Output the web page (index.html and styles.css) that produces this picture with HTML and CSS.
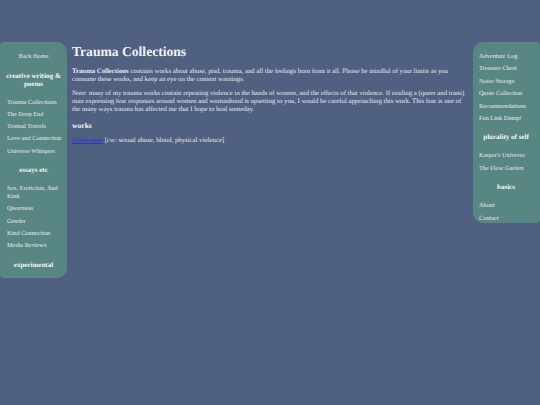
FILE: index.html
```html
<!DOCTYPE html>
<html>
<head>
<meta charset="utf-8">
<link rel="stylesheet" href="styles.css">
</head>
<body>
<div class="page">
  <nav class="side side-left">
    <a class="home" href="#">Back Home</a>
    <h3 class="sec">creative writing &amp; poems</h3>
    <ul>
      <li><a href="#">Trauma Collections</a></li>
      <li><a href="#">The Deep End</a></li>
      <li><a href="#">Textual Travels</a></li>
      <li><a href="#">Love and Connection</a></li>
      <li><a href="#">Universe Whispers</a></li>
    </ul>
    <h3 class="sec">essays etc</h3>
    <ul>
      <li><a href="#">Sex, Eroticism, And Kink</a></li>
      <li><a href="#">Queerness</a></li>
      <li><a href="#">Gender</a></li>
      <li><a href="#">Kind Connection</a></li>
      <li><a href="#">Media Reviews</a></li>
    </ul>
    <h3 class="sec last">experimental</h3>
  </nav>
  <main class="main">
    <h1 class="title">Trauma Collections</h1>
    <p><b>Trauma Collections</b> contains works about abuse, ptsd, trauma, and all the feelings born from it all. Please be mindful of your limits as you consume these works, and keep an eye on the content warnings.</p>
    <p>Note: many of my trauma works contain repeating violence in the hands of women, and the effects of that violence. If reading a (queer and trans) man expressing fear responses around women and womanhood is upsetting to you, I would be careful approaching this work. This fear is one of the many ways trauma has affected me that I hope to heal someday.</p>
    <h2 class="sub">works</h2>
    <p><a class="work" href="#">Dislocation</a> [cw: sexual abuse, blood, physical violence]</p>
  </main>
  <nav class="side side-right">
    <ul class="first">
      <li><a href="#">Adventure Log</a></li>
      <li><a href="#">Treasure Chest</a></li>
      <li><a href="#">Noise Storage</a></li>
      <li><a href="#">Quote Collection</a></li>
      <li><a href="#">Recommendations</a></li>
      <li><a href="#">Fun Link Dump!</a></li>
    </ul>
    <h3 class="sec">plurality of self</h3>
    <ul>
      <li><a href="#">Kasper's Universe</a></li>
      <li><a href="#">The Flow Garden</a></li>
    </ul>
    <h3 class="sec">basics</h3>
    <ul class="end">
      <li><a href="#">About</a></li>
      <li><a href="#">Contact</a></li>
    </ul>
  </nav>
</div>
</body>
</html>
```

FILE: styles.css
```css
html, body {
  margin: 0;
  padding: 0;
  background: #4f6080;
  height: 100%;
}
body {
  font-family: "Liberation Serif", "Times New Roman", serif;
  font-size: 6.3px;
  line-height: 7.8px;
  color: #e6e8ee;
  text-rendering: geometricPrecision;
}
.page {
  display: flex;
  align-items: flex-start;
  padding-top: 42px;
}
.side {
  background: #588783;
  width: 67px;
  flex: none;
  box-sizing: border-box;
}
.side-left {
  border-radius: 4px 10px 10px 4px;
  padding: 11px 0 9px 7px;
}
.side-right {
  border-radius: 10px 4px 4px 10px;
  padding: 11px 0 1px 6px;
}
.side a {
  color: #eaeaee;
  text-decoration: none;
}
.home {
  display: block;
  text-align: center;
  padding-right: 7px;
}
.sec {
  font-size: 7px;
  line-height: 8px;
  font-weight: bold;
  text-align: center;
  margin: 0 -3px 0 -3px;
  padding-right: 7px;
  color: #f6f6f8;
}
.side-left .sec {
  margin-top: 11px;
  margin-bottom: 11px;
}
.side-left .sec.last {
  margin-bottom: 0;
}
.side-right .sec {
  margin-top: 10.3px;
  margin-bottom: 11.3px;
}
.side ul {
  list-style: none;
  margin: 0;
  padding: 0;
}
.side li {
  margin-bottom: 4.4px;
}
.side-right li {
  margin-bottom: 4.6px;
}
.side-right .end li:last-child {
  margin-bottom: 0;
}
.main {
  flex: 1;
  min-width: 0;
  padding: 1px 3px 0 5px;
  font-size: 6.75px;
  line-height: 7.7px;
}
.title {
  font-size: 13.6px;
  line-height: 17px;
  margin: 0 0 8px 0;
  font-weight: bold;
  color: #f2f2f4;
}
.main p {
  margin: 0 0 7px 0;
}
.sub {
  font-size: 7.6px;
  line-height: 9px;
  font-weight: bold;
  margin: 7.5px 0 6.5px 0;
  color: #f2f2f4;
}
.work {
  color: #2c33c8;
  text-decoration: underline;
}
```
